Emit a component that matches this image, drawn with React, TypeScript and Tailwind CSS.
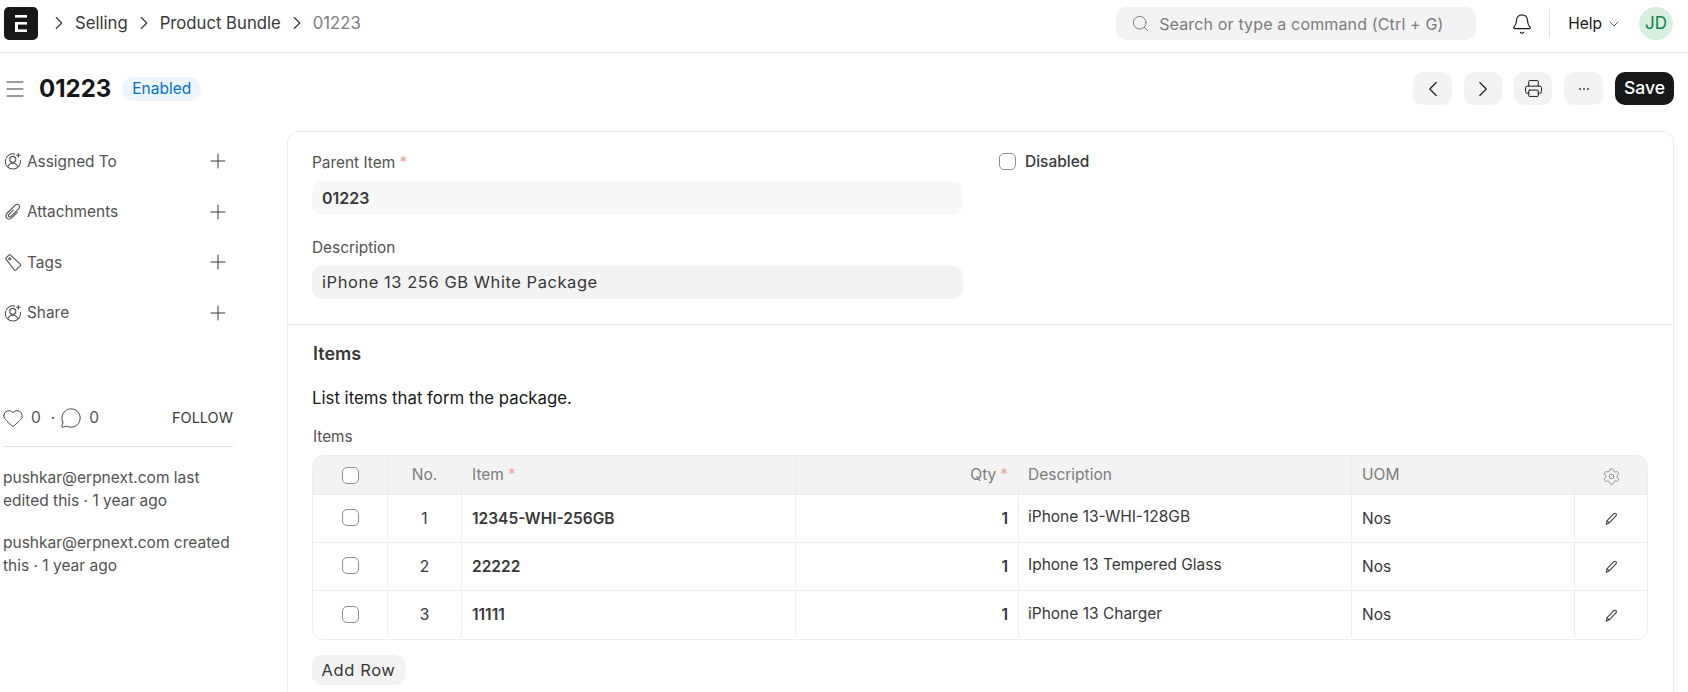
import { Bell, ChevronDown, ChevronLeft, ChevronRight, Heart, Menu, MessageCircle, Plus, Printer, Search, Settings } from 'lucide-react'

const rows = [
	{ no: 1, item: '12345-WHI-256GB', desc: 'iPhone 13-WHI-128GB' },
	{ no: 2, item: '22222', desc: 'Iphone 13 Tempered Glass' },
	{ no: 3, item: '11111', desc: 'iPhone 13 Charger' },
]

const cols = 'grid grid-cols-[75px_74px_334px_223px_333px_223px_74px]'

function UserPlusIcon() {
	return (
		<svg width="18" height="18" viewBox="0 0 18 18" fill="none" stroke="#525252" strokeWidth="1.1" className="shrink-0">
			<path d="M11 2.1A7.6 7.6 0 1 0 16.4 8" />
			<circle cx="8.8" cy="7.4" r="3" />
			<path d="M3.9 14.6c.9-2.2 2.7-3.3 4.9-3.3s4 1.1 4.9 3.3" />
			<path d="M14.4 1v4.4M12.2 3.2h4.4" />
		</svg>
	)
}

function ClipIcon() {
	return (
		<svg width="18" height="18" viewBox="0 0 18 18" fill="none" stroke="#525252" strokeWidth="1.1" className="shrink-0">
			<path d="M9.5 6.8L5 11.3c-.8.8-.8 1.7-.2 2.3s1.5.6 2.3-.2L14.6 5.9c1.3-1.3 1.3-2.8.3-3.8s-2.6-1-3.9.3L3.3 10c-1.7 1.7-1.8 3.9-.5 5.2s3.5 1.2 5.2-.5l5.8-5.8" />
		</svg>
	)
}

function TagIcon() {
	return (
		<svg width="18" height="18" viewBox="0 0 18 18" fill="none" stroke="#525252" strokeWidth="1.1" className="shrink-0">
			<path d="M2.3 4.6L5 1.9c.4-.4 1-.4 1.4 0l10 9.4c.4.4.4 1 0 1.4l-4.6 4.4c-.4.4-1 .4-1.4 0L2 6.2c-.4-.4-.2-1.1.3-1.6z" />
			<circle cx="5.8" cy="5.8" r="1" />
		</svg>
	)
}

function PencilIcon() {
	return (
		<svg width="15" height="15" viewBox="0 0 14 14" fill="none" stroke="#383838" strokeWidth="1">
			<path d="M2.2 12.3l.6-3.2 6.4-6.6c.6-.6 1.5-.6 2 0s.6 1.4 0 2L4.9 11.1z" />
			<path d="M2.8 9.1l2.1 2" />
		</svg>
	)
}

function Check() {
	return <span className="block w-[17px] h-[17px] rounded-[5px] border border-[#8f8f8f] bg-white" />
}

function TopBar() {
	return (
		<header className="h-[53px] shrink-0 border-b border-[#ededed] flex items-center pl-1 pr-[15px] pb-[5px]">
			<div className="w-[34px] h-[33px] rounded-[5px] bg-[#171717] flex items-center justify-center">
				<svg width="14" height="17" viewBox="0 0 14 17" fill="#fff">
					<rect x="1" y="0" width="12" height="2.6" />
					<rect x="1" y="7" width="12" height="2.6" />
					<rect x="1" y="14.4" width="12" height="2.6" />
					<rect x="1" y="7" width="3" height="10" />
				</svg>
			</div>
			<nav className="flex items-center text-[16.7px] text-[#383838] ml-[10px]">
				<ChevronRight size={22} strokeWidth={1.25} className="mr-[5px]" />
				<span>Selling</span>
				<ChevronRight size={22} strokeWidth={1.25} className="mx-[5px]" />
				<span>Product Bundle</span>
				<ChevronRight size={22} strokeWidth={1.25} className="mx-[5px]" />
				<span className="text-[#7c7c7c]">01223</span>
			</nav>
			<div className="ml-auto w-[360px] h-[33px] rounded-[10px] bg-[#f3f3f3] flex items-center pl-[15px] text-[16px] tracking-[0.15px] text-[#7c7c7c]">
				<Search size={19} strokeWidth={1.25} className="mr-[9px]" />
				Search or type a command (Ctrl + G)
			</div>
			<Bell size={22} strokeWidth={1.25} className="ml-[35px] text-[#171717]" />
			<span className="w-px h-[29px] bg-[#e2e2e2] ml-[16px]" />
			<span className="ml-[18px] text-[15.5px] text-[#171717]">Help</span>
			<ChevronDown size={16} strokeWidth={1.25} className="ml-[4px] text-[#383838]" />
			<div className="ml-[17px] w-[34px] h-[33px] rounded-full bg-[#d7efdf] flex items-center justify-center text-[17px] text-[#137f48]">JD</div>
		</header>
	)
}

function TitleRow() {
	return (
		<div className="h-[78px] shrink-0 flex items-center pl-[3px] pr-[14px] pb-[7px]">
			<Menu size={24} strokeWidth={1} className="text-[#383838]" />
			<h1 className="ml-[12px] text-[24px] font-bold text-[#171717]">01223</h1>
			<span className="ml-[11px] w-[79px] h-[24px] rounded-full bg-[#edf6fd] flex items-center justify-center text-[15.5px] text-[#0070cc]">Enabled</span>
			<div className="ml-auto flex gap-3 items-center">
				<button className="w-[39px] h-[33px] rounded-[10px] bg-[#f3f3f3] flex items-center justify-center text-[#171717]"><ChevronLeft size={26} strokeWidth={1} /></button>
				<button className="w-[38px] h-[33px] rounded-[10px] bg-[#f3f3f3] flex items-center justify-center text-[#171717]"><ChevronRight size={26} strokeWidth={1} /></button>
				<button className="w-[38px] h-[33px] rounded-[10px] bg-[#f3f3f3] flex items-center justify-center text-[#171717]"><Printer size={19} strokeWidth={1.25} /></button>
				<button className="w-[39px] h-[33px] rounded-[10px] bg-[#f3f3f3] flex items-center justify-center gap-[2px]">
					<span className="w-[2px] h-[2px] rounded-full bg-[#383838]" />
					<span className="w-[2px] h-[2px] rounded-full bg-[#383838]" />
					<span className="w-[2px] h-[2px] rounded-full bg-[#383838]" />
				</button>
				<button className="w-[59px] h-[33px] rounded-[10px] bg-[#171717] text-white text-[17.5px] font-medium">Save</button>
			</div>
		</div>
	)
}

function SideRow({ icon, label }: { icon: React.ReactNode; label: string }) {
	return (
		<div className="h-[50.5px] flex items-center text-[15.4px] text-[#525252]">
			<span className="w-[24px] flex justify-start pl-[1px]">{icon}</span>
			<span>{label}</span>
			<Plus size={24} strokeWidth={1} className="ml-auto mr-[3px] text-[#383838]" />
		</div>
	)
}

function Sidebar() {
	return (
		<aside className="w-[230px] ml-[3px] shrink-0 pt-[5px]">
			<SideRow icon={<UserPlusIcon />} label="Assigned To" />
			<SideRow icon={<ClipIcon />} label="Attachments" />
			<SideRow icon={<TagIcon />} label="Tags" />
			<SideRow icon={<UserPlusIcon />} label="Share" />
			<div className="mt-[68px] h-[23px] flex items-center text-[15.5px] text-[#525252]">
				<Heart size={22} strokeWidth={1} className="text-[#383838] -ml-[1px]" />
				<span className="ml-[7px]">0</span>
				<span className="ml-[10px]">·</span>
				<MessageCircle size={22} strokeWidth={1} className="ml-[5px] text-[#383838]" />
				<span className="ml-[7px]">0</span>
				<span className="ml-auto text-[14.5px] text-[#383838]">FOLLOW</span>
			</div>
			<div className="mt-[17px] border-t border-[#e2e2e2]" />
			<div className="mt-[19px] text-[15.5px] leading-[23px] text-[#525252]">
				<p>pushkar@erpnext.com last edited this · 1 year ago</p>
				<p className="mt-[19px]">pushkar@erpnext.com created this · 1 year ago</p>
			</div>
		</aside>
	)
}

function ItemsTable() {
	return (
		<div className="w-[1336px] rounded-[12px] border border-[#ededed] overflow-hidden text-[15.5px]">
			<div className={`${cols} h-[39px] bg-[#f3f3f3] text-[#7c7c7c] border-b border-[#ededed]`}>
				<div className="flex items-center justify-center border-r border-[#ededed]"><Check /></div>
				<div className="flex items-center justify-center border-r border-[#ededed]">No.</div>
				<div className="flex items-center px-[10px] border-r border-[#ededed]">Item <span className="text-[#f0a0a0] ml-1">*</span></div>
				<div className="flex items-center justify-end px-[10px] border-r border-[#ededed]">Qty <span className="text-[#f0a0a0] ml-1">*</span></div>
				<div className="flex items-center px-[9px] border-r border-[#ededed]">Description</div>
				<div className="flex items-center px-[10px] border-r border-[#ededed]">UOM</div>
				<div className="flex items-center justify-center pt-[3px] pr-[2px]"><Settings size={19} strokeWidth={1} /></div>
			</div>
			{rows.map((r, i) => (
				<div key={r.no} className={`${cols} h-[48px] text-[#383838] ${i < 2 ? 'border-b border-[#ededed]' : ''}`}>
					<div className="flex items-center justify-center border-r border-[#ededed] mb-[2px]"><Check /></div>
					<div className="flex items-center justify-center border-r border-[#ededed] mb-[2px] pt-[2px]">{r.no}</div>
					<div className="flex items-center px-[10px] border-r border-[#ededed] mb-[2px] pt-[2px] font-semibold">{r.item}</div>
					<div className="flex items-center justify-end px-[10px] border-r border-[#ededed] mb-[2px] pt-[2px] font-semibold">1</div>
					<div className="flex items-center px-[9px] border-r border-[#ededed] mb-[2px] pb-[1px]">{r.desc}</div>
					<div className="flex items-center px-[10px] border-r border-[#ededed] mb-[2px] pt-[2px]">Nos</div>
					<div className="flex items-center justify-center pr-[2px]"><PencilIcon /></div>
				</div>
			))}
		</div>
	)
}

function FormCard() {
	return (
		<main className="flex-1 border border-[#ededed] border-b-0 rounded-t-[12px]">
			<section className="h-[193px] border-b border-[#ededed] px-[24px] flex gap-[36px]">
				<div className="w-[651px]">
					<label className="block mt-[21px] h-[20px] leading-[20px] text-[15.4px] text-[#525252]">Parent Item <span className="text-[#f0a0a0]">*</span></label>
					<div className="mt-[8px] h-[34px] rounded-[10px] bg-[#f8f8f8] flex items-center px-[10px] text-[16px] font-semibold text-[#383838]">01223</div>
					<label className="block mt-[23px] h-[20px] leading-[20px] text-[15.4px] text-[#525252]">Description</label>
					<div className="mt-[8px] h-[33px] rounded-[10px] bg-[#f3f3f3] flex items-center px-[10px] pb-[1px] text-[16.5px] tracking-[0.55px] text-[#383838]">iPhone 13 256 GB White Package</div>
				</div>
				<div className="flex items-start mt-[21px] gap-[9px] text-[15.5px] font-medium text-[#383838]">
					<Check />
					<span className="leading-[18px]">Disabled</span>
				</div>
			</section>
			<section className="px-[24px]">
				<h2 className="mt-[18px] h-[22px] leading-[22px] pl-[1px] text-[18px] font-semibold text-[#383838]">Items</h2>
				<p className="mt-[22px] h-[22px] leading-[22px] text-[16.8px] text-[#171717]">List items that form the package.</p>
				<p className="mt-[18px] h-[20px] leading-[20px] pl-[1px] text-[15.3px] text-[#525252]">Items</p>
				<div className="mt-[8px]">
					<ItemsTable />
				</div>
				<button className="mt-[15px] w-[93px] h-[30px] rounded-[10px] bg-[#f3f3f3] text-[16.5px] tracking-[0.6px] text-[#383838]">Add Row</button>
			</section>
		</main>
	)
}

export default function App() {
	return (
		<div className="h-screen overflow-hidden flex flex-col bg-white font-['Inter',sans-serif]">
			<TopBar />
			<TitleRow />
			<div className="flex-1 flex pr-[14px]">
				<Sidebar />
				<div className="w-[54px] shrink-0" />
				<FormCard />
			</div>
		</div>
	)
}
